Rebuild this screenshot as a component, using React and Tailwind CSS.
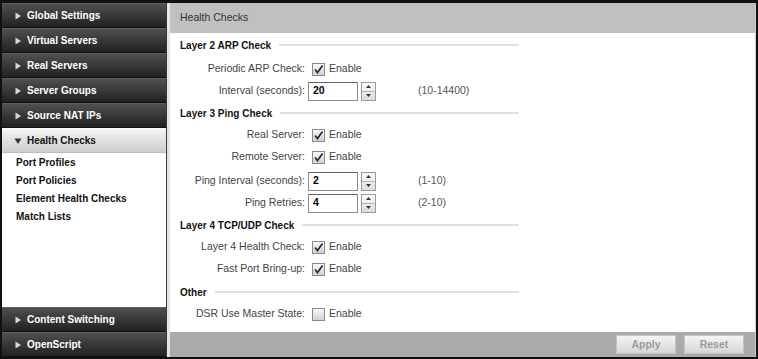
import React from 'react';

const font = { fontFamily: '"Liberation Sans", Arial, sans-serif' };

function Arrow({ open, dark }) {
  if (open) {
    return (
      <svg width="8" height="8" viewBox="0 0 8 8" className="flex-shrink-0">
        <polygon points="0.5,1.5 7.5,1.5 4,7" fill={dark ? '#333' : '#ddd'} />
      </svg>
    );
  }
  return (
    <svg width="8" height="8" viewBox="0 0 8 8" className="flex-shrink-0">
      <polygon points="1.5,0.5 7,4 1.5,7.5" fill="#d8d8d8" />
    </svg>
  );
}

function NavBar({ label, open }) {
  if (open) {
    return (
      <div className="flex items-center gap-[5px] h-[25px] pl-[12px] bg-gradient-to-b from-[#f4f4f4] to-[#cdcdcd] border-t border-[#fafafa] border-b border-b-[#bdbdbd] text-[10px] font-bold text-[#111]">
        <Arrow open dark />
        {label}
      </div>
    );
  }
  return (
    <div className="flex items-center gap-[5px] h-[25px] pl-[12px] bg-gradient-to-b from-[#505050] to-[#222] border-t border-[#5e5e5e] border-b border-b-[#111] text-[10px] font-bold text-white">
      <Arrow />
      {label}
    </div>
  );
}

function SectionHead({ title, className = '' }) {
  return (
    <div className={`flex items-center h-[22px] w-[339px] gap-[8px] ${className}`}>
      <span className="text-[10px] font-bold text-[#111] whitespace-nowrap">{title}</span>
      <span className="flex-1 h-[2px] bg-[#e0e0e0]" />
    </div>
  );
}

function Check({ checked }) {
  return (
    <span className="ml-[7px] w-[13px] h-[13px] flex items-center justify-center border border-[#8a8a8a] bg-gradient-to-b from-[#f8f8f8] to-[#d2d2d2] flex-shrink-0">
      {checked && (
        <svg width="11" height="11" viewBox="0 0 11 11">
          <path d="M2 5.5 L4.5 8.5 L9.5 1.5" fill="none" stroke="#2a2a2a" strokeWidth="1.7" />
        </svg>
      )}
    </span>
  );
}

function Row({ label, children, className = '' }) {
  return (
    <div className={`flex items-center h-[22px] ${className}`}>
      <span className="w-[125px] text-right text-[10.5px] text-[#444] whitespace-nowrap">{label}</span>
      {children}
    </div>
  );
}

function CheckRow({ label, checked }) {
  return (
    <Row label={label}>
      <Check checked={checked} />
      <span className="ml-[4px] text-[10.5px] text-[#444]">Enable</span>
    </Row>
  );
}

function SpinRow({ label, value, range, className }) {
  return (
    <Row label={label} className={className}>
      <div className="ml-[3px] w-[110px] flex items-center">
        <div className="w-[50px] h-[19px] border border-[#8d8d8d] border-t-[#666] bg-white flex items-center pl-[4px] text-[10.5px] font-bold text-black">
          {value}
        </div>
        <div className="ml-[3px] w-[15px] h-[19px] border border-[#9a9a9a] flex flex-col bg-gradient-to-b from-[#fafafa] to-[#dcdcdc]">
          <div className="flex-1 flex items-center justify-center border-b border-[#b5b5b5]">
            <svg width="5" height="3" viewBox="0 0 5 3"><polygon points="0,3 5,3 2.5,0" fill="#333" /></svg>
          </div>
          <div className="flex-1 flex items-center justify-center">
            <svg width="5" height="3" viewBox="0 0 5 3"><polygon points="0,0 5,0 2.5,3" fill="#333" /></svg>
          </div>
        </div>
      </div>
      <span className="text-[10.5px] text-[#555]">{range}</span>
    </Row>
  );
}

export default function App() {
  return (
    <div style={font} className="w-[758px] h-[359px] bg-[#111] pt-[3px] pl-[2px] pr-[2px] pb-[2px] flex overflow-hidden">
      <aside className="w-[164px] flex flex-col bg-white">
        <NavBar label="Global Settings" />
        <NavBar label="Virtual Servers" />
        <NavBar label="Real Servers" />
        <NavBar label="Server Groups" />
        <NavBar label="Source NAT IPs" />
        <NavBar label="Health Checks" open />
        <div className="flex-1 flex flex-col pl-[14px] text-[10px] font-bold text-[#111]">
          {['Port Profiles', 'Port Policies', 'Element Health Checks', 'Match Lists'].map(t => (
            <div key={t} className="h-[18px] flex items-center">{t}</div>
          ))}
        </div>
        <NavBar label="Content Switching" />
        <NavBar label="OpenScript" />
      </aside>
      <div className="w-[1px] bg-[#3a3a3a]" />
      <main className="flex-1 flex flex-col border-l-[3px] border-[#e4e4e4] border-r border-r-[#cfcfcf] bg-white">
        <div className="h-[30px] bg-[#c0c0c0] flex items-center pl-[10px] text-[10.5px] text-[#333]">Health Checks</div>
        <div className="flex-1 flex flex-col pl-[10px] pt-[1px]">
          <SectionHead title="Layer 2 ARP Check" className="mb-[2px]" />
          <CheckRow label="Periodic ARP Check:" checked />
          <SpinRow label="Interval (seconds):" value="20" range="(10-14400)" />
          <SectionHead title="Layer 3 Ping Check" />
          <CheckRow label="Real Server:" checked />
          <CheckRow label="Remote Server:" checked />
          <SpinRow label="Ping Interval (seconds):" value="2" range="(1-10)" className="mt-[2px]" />
          <SpinRow label="Ping Retries:" value="4" range="(2-10)" />
          <SectionHead title="Layer 4 TCP/UDP Check" />
          <CheckRow label="Layer 4 Health Check:" checked />
          <CheckRow label="Fast Port Bring-up:" checked />
          <SectionHead title="Other" className="mt-[1px]" />
          <CheckRow label="DSR Use Master State:" />
        </div>
        <div className="h-[25px] bg-[#ababab] flex items-center justify-end gap-[8px] pr-[11px]">
          {['Apply', 'Reset'].map(b => (
            <button key={b} type="button" className="w-[60px] h-[19px] border border-[#c4c4c4] bg-gradient-to-b from-[#f4f4f4] to-[#d6d6d6] text-[10.5px] font-bold text-[#9c9c9c]">
              {b}
            </button>
          ))}
        </div>
      </main>
    </div>
  );
}
